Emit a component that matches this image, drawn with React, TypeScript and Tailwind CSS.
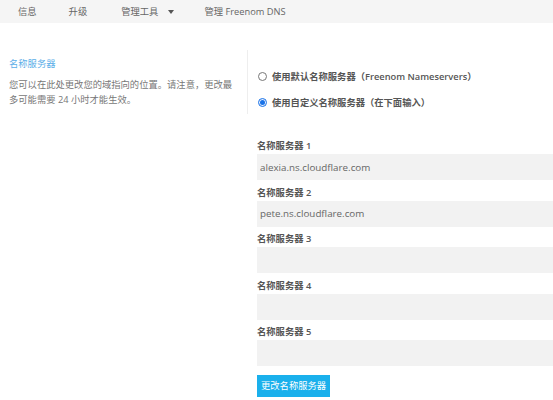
import React, { useState } from 'react';

const font = { fontFamily: '"Open Sans", "Noto Sans CJK SC", sans-serif' };

const NavItem: React.FC<{ label: string; caret?: boolean; className?: string }> = ({ label, caret, className }) => (
  <div className={`flex items-center gap-[10px] text-[#666] ${className ?? ''}`}>
    <span>{label}</span>
    {caret && (
      <svg width="6" height="4" viewBox="0 0 6 4" className="fill-[#555]">
        <path d="M0 0h6L3 4z" />
      </svg>
    )}
  </div>
);

const Radio: React.FC<{ checked: boolean; label: string; onClick: () => void }> = ({ checked, label, onClick }) => (
  <div className="flex items-center gap-[5px] cursor-pointer" onClick={onClick}>
    {checked ? (
      <div className="w-[9px] h-[9px] rounded-full border border-[#1a73e8] bg-[#e8f0fe] flex items-center justify-center">
        <div className="w-[5px] h-[5px] rounded-full bg-[#1a73e8]" />
      </div>
    ) : (
      <div className="w-[9px] h-[9px] rounded-full border border-[#777] bg-white" />
    )}
    <span className="font-semibold text-[#555]">{label}</span>
  </div>
);

const Field: React.FC<{ n: number; value: string }> = ({ n, value }) => (
  <div className="flex flex-col">
    <div className="h-[20.5px] flex items-end pb-[1px] font-semibold text-[#555]">名称服务器 {n}</div>
    <input
      defaultValue={value}
      className="h-[26px] w-full bg-[#f2f2f2] px-[3px] text-[9.8px] text-[#666] outline-none"
    />
  </div>
);

export default function App() {
  const [custom, setCustom] = useState(true);
  const servers = ['alexia.ns.cloudflare.com', 'pete.ns.cloudflare.com', '', '', ''];

  return (
    <div style={font} className="w-[553px] h-[400px] bg-white text-[9.3px] overflow-hidden">
      <div className="h-[23px] bg-[#f5f5f5] flex items-center pl-[18px]">
        <NavItem label="信息" />
        <NavItem label="升级" className="ml-[32px]" />
        <NavItem label="管理工具" caret className="ml-[34px]" />
        <NavItem label="管理 Freenom DNS" className="ml-[30px]" />
      </div>

      <div className="flex mt-[27px]">
        <div className="w-[247px] shrink-0 pl-[9px] pr-[8px] pt-[7px]">
          <div className="text-[#5aaee8] leading-[14px]">名称服务器</div>
          <p className="mt-[6px] text-[#777] leading-[15px]">
            您可以在此处更改您的域指向的位置。请注意，更改最多可能需要 24 小时才能生效。
          </p>
        </div>

        <div className="flex-1">
          <div className="h-[64px] border-l border-[#eee] pl-[10px] flex flex-col gap-[12px] pt-[20px]">
            <Radio
              checked={!custom}
              onClick={() => setCustom(false)}
              label="使用默认名称服务器（Freenom Nameservers）"
            />
            <Radio checked={custom} onClick={() => setCustom(true)} label="使用自定义名称服务器（在下面输入）" />
          </div>

          <div className="pl-[10px] mt-[19.5px] flex flex-col">
            {servers.map((s, i) => (
              <Field key={i} n={i + 1} value={s} />
            ))}
            <div className="mt-[9px]">
              <button className="h-[22px] px-[4px] bg-[#1ab0ec] text-white">更改名称服务器</button>
            </div>
          </div>
        </div>
      </div>
    </div>
  );
}
